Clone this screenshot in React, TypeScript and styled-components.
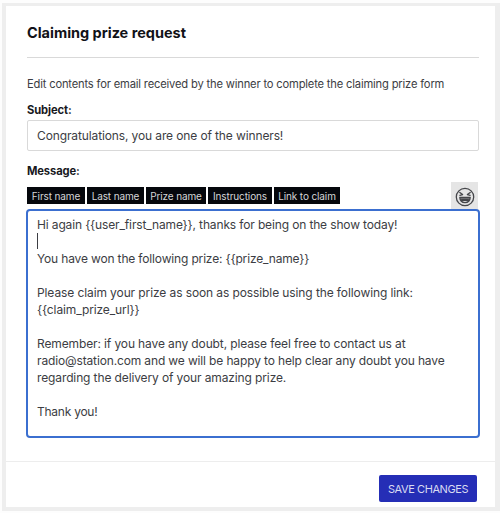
import React from 'react';
import styled, { createGlobalStyle } from 'styled-components';

const GlobalStyle = createGlobalStyle`
  * { box-sizing: border-box; }
  body { margin: 0; background: #fdfdfd; font-family: Inter, "Liberation Sans", sans-serif; color: #3c3d43; }
`;

const Page = styled.div`
  height: 513px;
  padding: 3px 0 2px 2px;
  overflow: hidden;
`;

const Frame = styled.main`
  height: 508px;
  padding: 3px 5px 4px 4px;
  background: #eeeeee;
`;

const Card = styled.section`
  height: 501px;
  display: flex;
  flex-direction: column;
  background: #fff;
`;

const Body = styled.div`
  height: 456px;
  padding: 15px 16px 0 21px;
  border-bottom: 1px solid #ededed;
`;

const Title = styled.h1`
  margin: 0;
  height: 37px;
  border-bottom: 1px solid #d9d9d9;
  font-size: 14.5px;
  line-height: 23px;
  font-weight: 700;
  letter-spacing: -0.02px;
  color: #111217;
`;

const Description = styled.p`
  margin: 17px 0 0;
  font-size: 11.2px;
  line-height: 18px;
  letter-spacing: -0.18px;
  white-space: nowrap;
`;

const Label = styled.label<{ $gap: number }>`
  display: block;
  margin-top: ${(p) => p.$gap}px;
  font-size: 11.2px;
  line-height: 16px;
  font-weight: 700;
  letter-spacing: -0.12px;
  color: #17181d;
`;

const SubjectField = styled.div`
  display: flex;
  align-items: center;
  height: 31px;
  margin-top: 2px;
  padding: 0 9px;
  border: 1px solid #d9d9d9;
  border-radius: 2px;
  font-size: 12px;
  letter-spacing: -0.12px;
  white-space: nowrap;
`;

const Toolbar = styled.div`
  display: flex;
  align-items: flex-end;
  justify-content: space-between;
  height: 27px;
  margin-top: 3px;
  padding-right: 1px;
`;

const Chips = styled.div`
  display: flex;
  gap: 2px;
  margin-bottom: 5px;
`;

const Chip = styled.button<{ $width: number }>`
  width: ${(p) => p.$width}px;
  height: 17px;
  padding: 0;
  border: 0;
  background: #05070c;
  color: #d6d6d8;
  font: 400 10px/16px Inter, "Liberation Sans", sans-serif;
  letter-spacing: -0.12px;
  white-space: nowrap;
`;

const EmojiButton = styled.button`
  display: flex;
  align-items: center;
  justify-content: center;
  width: 27px;
  height: 27px;
  padding: 2px 0 0;
  border: 0;
  background: #e5e5e5;
`;

const MessageField = styled.div`
  height: 229px;
  margin: 0 -1px;
  padding: 5px 9px;
  border: 2px solid #3b6fd0;
  border-radius: 4px;
  font-size: 12px;
  line-height: 17px;
`;

const Line = styled.div<{ $spacing?: number }>`
  height: 17px;
  letter-spacing: ${(p) => p.$spacing ?? -0.12}px;
  white-space: pre;
`;

const Caret = styled.span`
  display: block;
  width: 1px;
  height: 16px;
  background: #3c3d43;
`;

const Footer = styled.footer`
  display: flex;
  justify-content: flex-end;
  padding: 13px 18px 0;
`;

const SaveButton = styled.button`
  width: 98px;
  height: 27px;
  padding: 1px 0 0;
  border: 0;
  border-radius: 2px;
  background: #252eb6;
  color: #d9dbf2;
  font: 400 11px/26px Inter, "Liberation Sans", sans-serif;
  letter-spacing: -0.42px;
  white-space: nowrap;
`;

const LaughIcon = () => (
  <svg width="20" height="20" viewBox="0 0 20 20" fill="none" stroke="#45464a" strokeWidth="1.3" strokeLinecap="round" strokeLinejoin="round">
    <circle cx="10" cy="10" r="8.7" />
    <path d="M4.8 5.4 7.6 7.6 4.9 8.4M15.2 5.4 12.4 7.6l2.7.8" />
    <path d="M4.8 10.4h10.4c-.2 3.1-2.2 5.2-5.2 5.2s-5-2.1-5.2-5.2Z" />
    <path d="M5.6 12h8.8M6.5 13.4h7" />
  </svg>
);

const chips = [
  { label: 'First name', width: 58 },
  { label: 'Last name', width: 57 },
  { label: 'Prize name', width: 60 },
  { label: 'Instructions', width: 64 },
  { label: 'Link to claim', width: 66 },
];

const lines: { text: string; spacing?: number; caret?: boolean }[] = [
  { text: 'Hi again {{user_first_name}}, thanks for being on the show today!', spacing: -0.14 },
  { text: '', caret: true },
  { text: 'You have won the following prize: {{prize_name}}', spacing: -0.16 },
  { text: '' },
  { text: 'Please claim your prize as soon as possible using the following link:', spacing: -0.1 },
  { text: '{{claim_prize_url}}' },
  { text: '' },
  { text: 'Remember: if you have any doubt, please feel free to contact us at' },
  { text: 'radio@station.com and we will be happy to help clear any doubt you have', spacing: -0.14 },
  { text: 'regarding the delivery of your amazing prize.' },
  { text: '' },
  { text: 'Thank you!', spacing: -0.25 },
];

export default function App() {
  return (
    <Page>
      <GlobalStyle />
      <Frame>
        <Card>
          <Body>
            <Title>Claiming prize request</Title>
            <Description>Edit contents for email received by the winner to complete the claiming prize form</Description>
            <Label $gap={9}>Subject:</Label>
            <SubjectField>Congratulations, you are one of the winners!</SubjectField>
            <Label $gap={12}>Message:</Label>
            <Toolbar>
              <Chips>
                {chips.map((c) => (
                  <Chip key={c.label} $width={c.width}>{c.label}</Chip>
                ))}
              </Chips>
              <EmojiButton aria-label="Insert emoji"><LaughIcon /></EmojiButton>
            </Toolbar>
            <MessageField>
              {lines.map((l, i) => (
                <Line key={i} $spacing={l.spacing}>{l.caret ? <Caret /> : l.text}</Line>
              ))}
            </MessageField>
          </Body>
          <Footer>
            <SaveButton>SAVE CHANGES</SaveButton>
          </Footer>
        </Card>
      </Frame>
    </Page>
  );
}
